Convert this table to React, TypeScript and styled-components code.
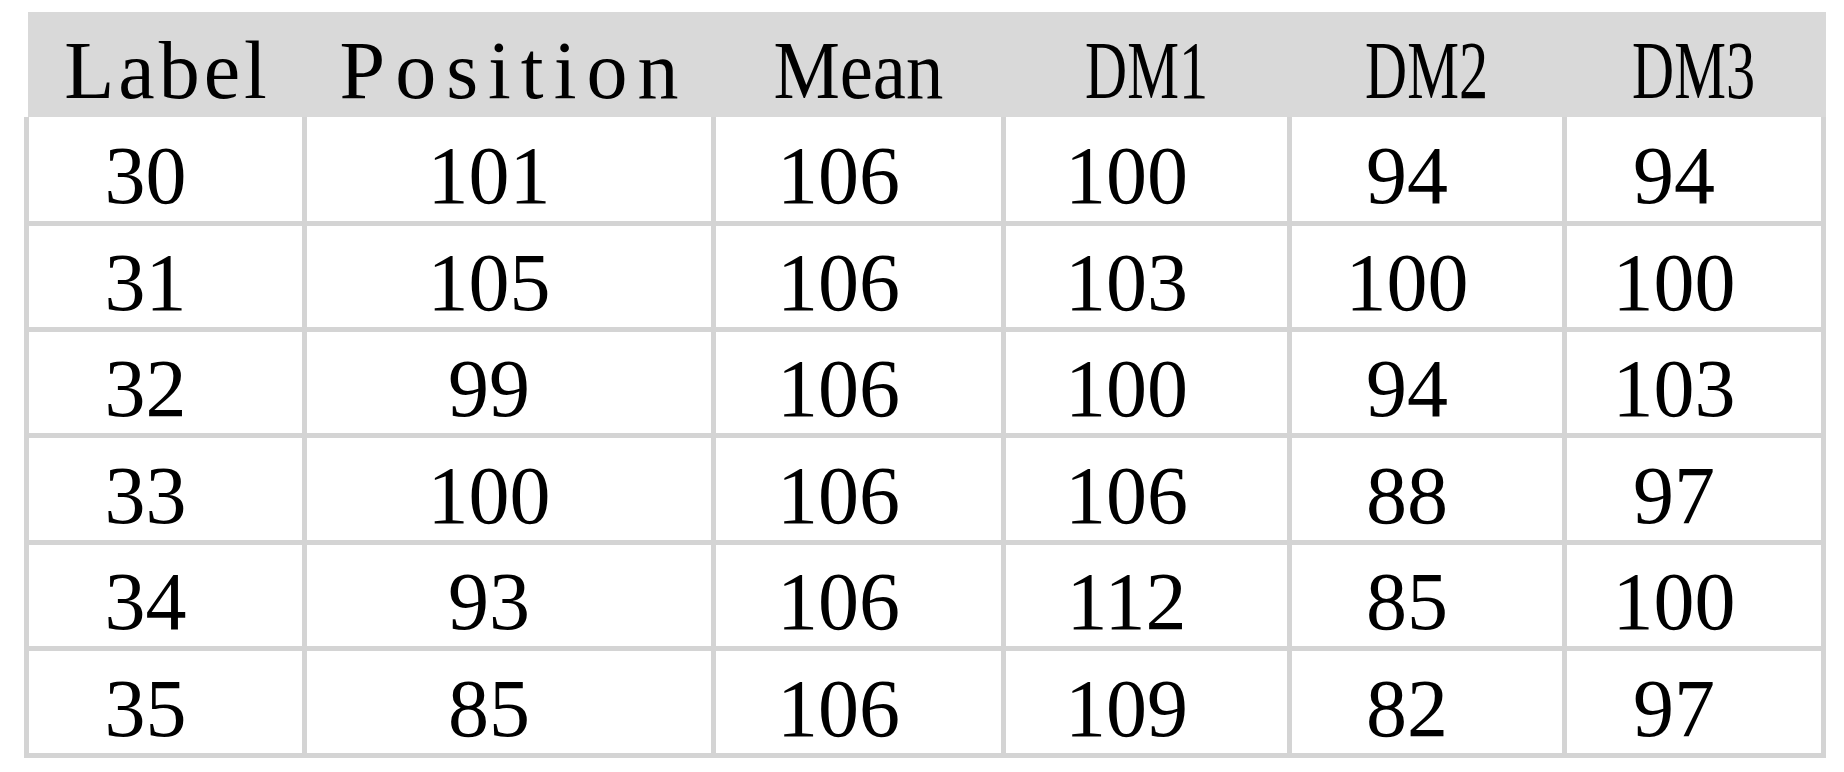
import React from "react";
import styled, { createGlobalStyle } from "styled-components";

const GlobalStyle = createGlobalStyle`
  html, body {
    margin: 0;
    padding: 0;
    background: #ffffff;
  }
  body {
    font-family: "Liberation Serif", "Times New Roman", serif;
  }
`;

const COLS = "273px 404px 285px 281px 270px 254px";

const Page = styled.div`
  padding: 12px 0 0 24px;
`;

const Table = styled.div`
  display: flex;
  flex-direction: column;
  width: 1802px;
`;

const HeaderRow = styled.div`
  display: grid;
  grid-template-columns: ${COLS};
  column-gap: 5px;
  height: 105px;
  margin-left: 4px;
  padding: 0 5px 0 1px;
  background: #d9d9d9;
`;

const HeadCell = styled.div`
  display: flex;
  align-items: center;
  justify-content: center;
  padding-top: 12px;
  box-sizing: border-box;
  font-size: 82px;
  line-height: 1;
  color: #000;
  white-space: nowrap;
`;

const HeadText = styled.span<{ $sx: number; $ls: number }>`
  display: inline-block;
  letter-spacing: ${(p) => p.$ls}px;
  margin-right: ${(p) => -p.$ls}px;
  transform: scaleX(${(p) => p.$sx});
`;

const Body = styled.div`
  display: grid;
  grid-template-columns: ${COLS};
  grid-template-rows: 104px 101px 101px 102px 101px 102px;
  gap: 5px;
  padding: 0 5px 5px 5px;
  background: #d4d4d4;
`;

const Cell = styled.div`
  display: flex;
  align-items: center;
  justify-content: center;
  background: #ffffff;
  padding: 13px 40px 0 0;
  box-sizing: border-box;
  font-size: 82px;
  line-height: 1;
  color: #000;
`;

const headers: { text: string; sx: number; ls: number }[] = [
  { text: "Label", sx: 1, ls: 4 },
  { text: "Position", sx: 1, ls: 10 },
  { text: "Mean", sx: 0.91, ls: 0 },
  { text: "DM1", sx: 0.71, ls: 0 },
  { text: "DM2", sx: 0.71, ls: 0 },
  { text: "DM3", sx: 0.71, ls: 0 },
];

const rows: number[][] = [
  [30, 101, 106, 100, 94, 94],
  [31, 105, 106, 103, 100, 100],
  [32, 99, 106, 100, 94, 103],
  [33, 100, 106, 106, 88, 97],
  [34, 93, 106, 112, 85, 100],
  [35, 85, 106, 109, 82, 97],
];

export default function App() {
  return (
    <>
      <GlobalStyle />
      <Page>
        <Table>
          <HeaderRow>
            {headers.map((h) => (
              <HeadCell key={h.text}>
                <HeadText $sx={h.sx} $ls={h.ls}>
                  {h.text}
                </HeadText>
              </HeadCell>
            ))}
          </HeaderRow>
          <Body>
            {rows.map((r, ri) =>
              r.map((v, ci) => <Cell key={`${ri}-${ci}`}>{v}</Cell>)
            )}
          </Body>
        </Table>
      </Page>
    </>
  );
}
